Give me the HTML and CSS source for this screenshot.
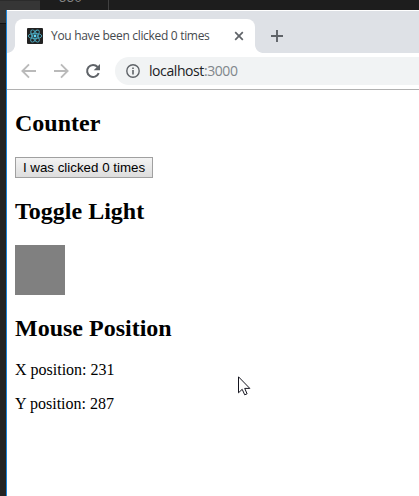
FILE: index.html
```html
<!DOCTYPE html>
<html lang="en">
<head>
<meta charset="utf-8">
<title>You have been clicked 0 times</title>
<link rel="stylesheet" href="styles.css">
</head>
<body>
<div class="desktop">
  <div class="backdrop"><div class="panel"></div><div class="ruler">550</div></div>
  <main class="window">
    <header class="tabstrip">
      <div class="tab">
        <svg class="favicon" width="16" height="16" viewBox="0 0 16 16"><rect width="16" height="16" rx="1" fill="#222"/><g fill="none" stroke="#4ba9c0" stroke-width=".9"><ellipse cx="8" cy="8" rx="6.8" ry="2.6"/><ellipse cx="8" cy="8" rx="6.8" ry="2.6" transform="rotate(60 8 8)"/><ellipse cx="8" cy="8" rx="6.8" ry="2.6" transform="rotate(120 8 8)"/></g><circle cx="8" cy="8" r="1.4" fill="#61dafb"/></svg>
        <span class="tab-title">You have been clicked 0 times</span>
        <svg class="close" width="10" height="10" viewBox="0 0 10 10"><path d="M1.2 1.2l7.6 7.6M8.8 1.2L1.2 8.8" stroke="#5f6368" stroke-width="1.7"/></svg>
      </div>
      <svg class="plus" width="12" height="12" viewBox="0 0 12 12"><path d="M6 0v12M0 6h12" stroke="#5f6368" stroke-width="1.9"/></svg>
    </header>
    <nav class="toolbar">
      <svg width="16" height="16" viewBox="0 0 16 16"><path d="M15 8H2.4M8 1.4L1.4 8 8 14.6" fill="none" stroke="#bababa" stroke-width="1.9"/></svg>
      <svg width="16" height="16" viewBox="0 0 16 16"><path d="M1 8h12.6M8 1.4L14.6 8 8 14.6" fill="none" stroke="#bababa" stroke-width="1.9"/></svg>
      <svg width="16" height="16" viewBox="0 0 16 16"><path d="M13.7 10.2A6 6 0 1 1 12.6 4" fill="none" stroke="#5f6368" stroke-width="2"/><path d="M15 1v6.3H8.7z" fill="#5f6368"/></svg>
      <div class="address">
        <svg width="14" height="14" viewBox="0 0 14 14"><circle cx="7" cy="7" r="6.2" fill="none" stroke="#5f6368" stroke-width="1.4"/><path d="M7 6v4.5M7 3.4v1.7" stroke="#5f6368" stroke-width="1.6"/></svg>
        <span class="url">localhost<span class="port">:3000</span></span>
      </div>
    </nav>
    <section class="page">
      <h2>Counter</h2>
      <button class="counter">I was clicked 0 times</button>
      <h2>Toggle Light</h2>
      <div class="light"></div>
      <h2>Mouse Position</h2>
      <p>X position: 231</p>
      <p>Y position: 287</p>
    </section>
  </main>
  <svg class="cursor" width="13" height="20" viewBox="0 0 13 20"><path d="M.5.8v16l3.7-3.5 2.5 5.5 2.4-1-2.4-5.4h5.1z" fill="#fff" stroke="#15151f" stroke-width="1"/></svg>
</div>
</body>
</html>
```
FILE: styles.css
```css
* { box-sizing: border-box; }
body { margin: 0; }
svg { display: block; flex: none; }
.desktop {
  position: relative;
  width: 419px;
  height: 496px;
  overflow: hidden;
  background: #1e1e1e;
  padding: 10px 0 0 6px;
}
.backdrop {
  position: absolute;
  inset: 0;
  background: linear-gradient(90deg, #232323 6px, #1d1d1d 6px);
}
.panel {
  width: 40px;
  height: 24px;
  background: linear-gradient(#2b2b2b 1px, #363636 1px, #363636 23px, #111 23px);
}
.ruler {
  position: absolute;
  left: 40px;
  top: 0;
  width: 69px;
  height: 10px;
  border-right: 1px solid #414141;
  padding: 0 0 4px 19px;
  font: 13px/16px "Liberation Sans", sans-serif;
  letter-spacing: .5px;
  color: #858585;
  display: flex;
  align-items: flex-end;
}
.window {
  position: relative;
  height: 486px;
  border-left: 1px solid #1883d7;
  background: #fff;
}
.tabstrip {
  height: 43px;
  border-top: 1px solid #fff;
  background: #dee1e6;
  padding: 8px 0 0 8px;
  display: flex;
}
.tab {
  position: relative;
  width: 240px;
  height: 34px;
  border-radius: 8px 8px 0 0;
  background: #fff;
  display: flex;
  align-items: center;
  padding: 0 11px 0 12px;
}
.tab::before, .tab::after {
  content: "";
  position: absolute;
  bottom: 0;
  width: 8px;
  height: 8px;
}
.tab::before { left: -8px; background: radial-gradient(circle at 0 0, #dee1e6 7.5px, #fff 8.2px); }
.tab::after { right: -8px; background: radial-gradient(circle at 100% 0, #dee1e6 7.5px, #fff 8.2px); }
.tab-title {
  margin-left: 8px;
  flex: 1;
  white-space: nowrap;
  font: 12px/16px "Open Sans", sans-serif;
  letter-spacing: -.31px;
  color: #45494e;
}
.plus { margin: 11px 0 0 16px; }
.toolbar {
  height: 37px;
  border-bottom: 1px solid #b1b1b1;
  padding: 0 0 0 14px;
  display: flex;
  align-items: center;
  gap: 16px;
}
.address {
  flex: 1;
  height: 28px;
  margin-left: -2px;
  border-radius: 14px 0 0 14px;
  background: #f1f3f4;
  padding-left: 11px;
  display: flex;
  align-items: center;
  gap: 9px;
}
.url {
  font: 14px/20px "Open Sans", sans-serif;
  letter-spacing: -.42px;
  color: #202124;
}
.port { color: #80868b; }
.page {
  display: flow-root;
  padding: 0 8px;
  font: 16px/18px "Liberation Serif", serif;
  color: #000;
}
.page h2 { margin: 20px 0; font-size: 24px; line-height: 27px; }
.page h2:last-of-type { margin-bottom: 19px; }
.page p { margin: 0 0 16px; }
.counter {
  display: block;
  width: 138px;
  height: 21px;
  padding: 0;
  border: 1px solid #a0a0a0;
  border-radius: 0;
  background: linear-gradient(#f3f3f3, #ddd);
  font: 13.333px/17px "Liberation Sans", sans-serif;
  color: #000;
  white-space: nowrap;
}
.light { width: 50px; height: 50px; background: #808080; }
.cursor { position: absolute; left: 238px; top: 376px; }
```
